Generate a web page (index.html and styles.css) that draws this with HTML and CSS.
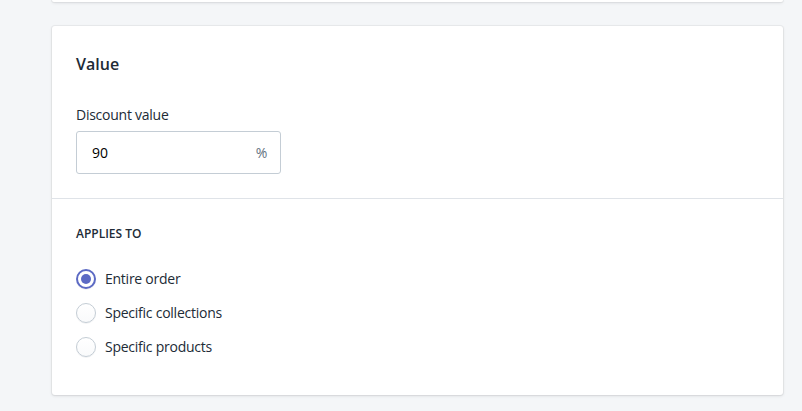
FILE: index.html
```html
<!DOCTYPE html>
<html lang="en">
<head>
  <meta charset="UTF-8">
  <title>Discount</title>
  <link rel="stylesheet" href="styles.css">
</head>
<body>
  <div class="page">
    <div class="card card-top"></div>
    <div class="card">
      <div class="section">
        <h2 class="title">Value</h2>
        <label class="label" for="amount">Discount value</label>
        <div class="field">
          <input id="amount" class="field-input" type="text" value="90">
          <span class="suffix">%</span>
        </div>
      </div>
      <div class="section section-applies">
        <h3 class="subtitle">Applies to</h3>
        <ul class="choices">
          <li class="choice"><span class="radio checked"></span>Entire order</li>
          <li class="choice"><span class="radio"></span>Specific collections</li>
          <li class="choice"><span class="radio"></span>Specific products</li>
        </ul>
      </div>
    </div>
  </div>
</body>
</html>
```

FILE: styles.css
```css
*{
  margin: 0;
  padding: 0;
  box-sizing: border-box;
}
body{
  background-color: #f4f6f8;
  font-family: "Open Sans", "Noto Sans", sans-serif;
  color: #212b36;
  font-size: 14px;
  letter-spacing: -0.25px;
}
.page{
  padding: 0 19px 0 52px;
}
.card{
  background-color: #fff;
  border-radius: 3px;
  box-shadow: 0 0 0 1px rgba(63,63,68,.05), 0 1px 3px 0 rgba(63,63,68,.15);
  margin-bottom: 15px;
}
.card-top{
  height: 2px;
  border-radius: 0 0 3px 3px;
  margin-bottom: 24px;
}
.section{
  padding: 26px 24px 24px;
  border-bottom: 1px solid #dfe3e8;
}
.section:last-child{
  border-bottom: 0;
}
.title{
  font-size: 16px;
  font-weight: 600;
  line-height: 24px;
  margin-bottom: 29px;
  letter-spacing: 0;
}
.label{
  display: block;
  line-height: 20px;
  margin-bottom: 6px;
}
.field{
  width: 205px;
  height: 43px;
  border: 1px solid #c4cdd5;
  border-radius: 3px;
  display: flex;
  align-items: center;
  padding: 0 13px 0 15px;
}
.field-input{
  flex: 1;
  border: 0;
  outline: 0;
  font: inherit;
  color: #000;
  min-width: 0;
}
.suffix{
  color: #637381;
}
.section-applies{
  padding-top: 27px;
  padding-bottom: 38px;
}
.subtitle{
  font-size: 12px;
  font-weight: 600;
  text-transform: uppercase;
  line-height: 16px;
  margin-bottom: 27px;
  letter-spacing: 0;
}
.choices{
  list-style-type: none;
  display: flex;
  flex-direction: column;
  gap: 14px;
}
.choice{
  display: flex;
  align-items: center;
  gap: 9px;
  line-height: 20px;
}
.radio{
  width: 20px;
  height: 20px;
  border-radius: 50%;
  border: 1px solid #c4cdd5;
  background: linear-gradient(to bottom, #fff, #f9fafb);
  box-shadow: 0 1px 0 0 rgba(22,29,37,.05);
  position: relative;
}
.radio.checked{
  border: 2px solid #5c6ac4;
  background: #fff;
}
.radio.checked::after{
  content: "";
  position: absolute;
  left: 3px;
  top: 3px;
  width: 10px;
  height: 10px;
  border-radius: 50%;
  background-color: #5c6ac4;
}
```
